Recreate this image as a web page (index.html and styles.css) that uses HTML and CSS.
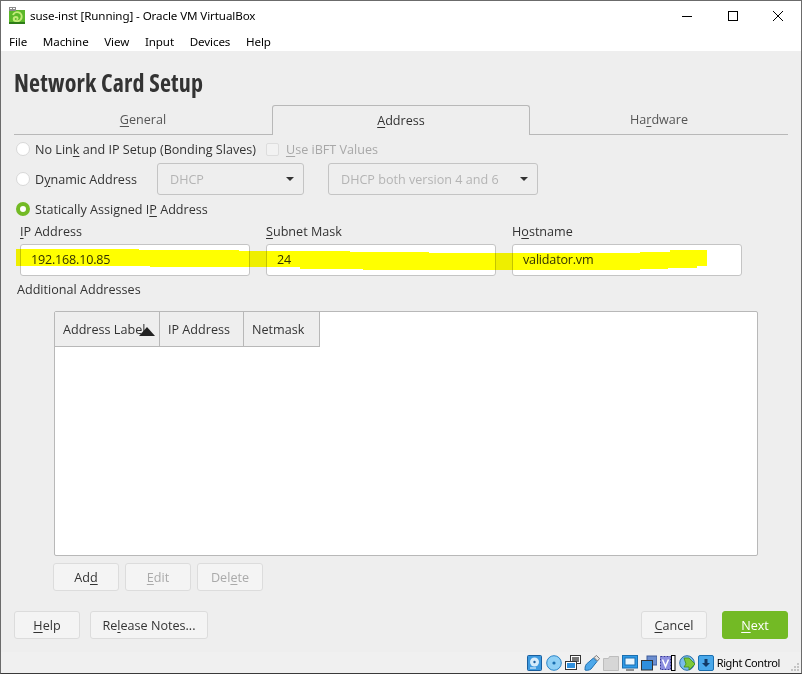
FILE: index.html
```html
<!DOCTYPE html>
<html lang="en">
<head>
  <meta charset="UTF-8">
  <meta name="viewport" content="width=device-width, initial-scale=1.0">
  <title>suse-inst [Running] - Oracle VM VirtualBox</title>
  <link rel="stylesheet" href="styles.css">
</head>
<body>
  <div class="window">
    <div class="titlebar">
      <svg class="app-icon" width="16" height="17" viewBox="0 0 16 17">
        <rect x="0" y="3" width="16" height="14" fill="#5cb82a"/>
        <rect x="0" y="0" width="7" height="4" fill="#8a8a8a"/>
        <rect x="1" y="1" width="2" height="1" fill="#fff"/>
        <rect x="4" y="1" width="2" height="1" fill="#fff"/>
        <path d="M4 8a4.5 4.5 0 1 1 3 6c-3 0-3-4 0-4 2 0 2 2 .5 2" fill="none" stroke="#c4ec7a" stroke-width="2"/>
        <rect x="0" y="15" width="16" height="2" fill="#2e7d18"/>
      </svg>
      <span class="window-title">suse-inst [Running] - Oracle VM VirtualBox</span>
      <div class="window-controls">
        <svg width="10" height="10" viewBox="0 0 10 10"><path d="M0 5.500h10" stroke="#000"/></svg>
        <svg width="10" height="10" viewBox="0 0 10 10"><rect x=".5" y=".5" width="9" height="9" fill="none" stroke="#000"/></svg>
        <svg width="10" height="10" viewBox="0 0 10 10"><path d="M0 0l10 10M10 0L0 10" stroke="#000"/></svg>
      </div>
    </div>
    <div class="menubar">
      <span>File</span>
      <span>Machine</span>
      <span>View</span>
      <span>Input</span>
      <span>Devices</span>
      <span>Help</span>
    </div>

    <div class="dialog">
      <h1>Network Card Setup</h1>

      <div class="tabs">
        <div class="tab"><u>G</u>eneral</div>
        <div class="tab active"><u>A</u>ddress</div>
        <div class="tab">Ha<u>r</u>dware</div>
      </div>

      <div class="option-row first">
        <span class="radio"></span>
        <span class="option-label">No Lin<u>k</u> and IP Setup (Bonding Slaves)</span>
        <span class="checkbox"></span>
        <span class="disabled-text"><u>U</u>se iBFT Values</span>
      </div>
      <div class="option-row">
        <span class="radio"></span>
        <span class="option-label dyn-label">D<u>y</u>namic Address</span>
        <div class="combo combo-small"><span>DHCP</span><i class="caret"></i></div>
        <div class="combo combo-large"><span>DHCP both version 4 and 6</span><i class="caret"></i></div>
      </div>
      <div class="option-row">
        <span class="radio checked"></span>
        <span class="option-label">Statically Assigned I<u>P</u> Address</span>
      </div>

      <div class="fields">
        <div class="field">
          <label><u>I</u>P Address</label>
          <div class="input">192.168.10.85</div>
        </div>
        <div class="field">
          <label><u>S</u>ubnet Mask</label>
          <div class="input">24</div>
        </div>
        <div class="field">
          <label>H<u>o</u>stname</label>
          <div class="input">validator.vm</div>
        </div>
      </div>

      <div class="additional">Additional Addresses</div>

      <div class="table-box">
        <div class="table-head">
          <div class="col col-label">Address Label<i class="sort"></i></div>
          <div class="col col-ip">IP Address</div>
          <div class="col col-mask">Netmask</div>
        </div>
      </div>

      <div class="table-buttons">
        <div class="btn">Ad<u>d</u></div>
        <div class="btn off"><u>E</u>dit</div>
        <div class="btn off">Del<u>e</u>te</div>
      </div>

      <div class="footer">
        <div class="btn btn-help"><u>H</u>elp</div>
        <div class="btn btn-notes">Re<u>l</u>ease Notes...</div>
        <div class="btn btn-cancel"><u>C</u>ancel</div>
        <div class="btn btn-next"><u>N</u>ext</div>
      </div>
    </div>

    <div class="statusbar">
      <svg width="16" height="16" viewBox="0 0 16 16"><rect x=".5" y=".5" width="14" height="15" rx="1" fill="#3d9ae0" stroke="#1a5f9e"/><circle cx="7.500" cy="7" r="4.500" fill="#d8ecfa"/><circle cx="7.500" cy="7" r="1.200" fill="#1a5f9e"/><path d="M3 13h6" stroke="#fff"/></svg>
      <svg width="16" height="16" viewBox="0 0 16 16"><circle cx="8" cy="8" r="7.300" fill="#8fd0f5" stroke="#2a84c8"/><circle cx="8" cy="8" r="1.600" fill="#1a6fb0"/></svg>
      <svg width="16" height="16" viewBox="0 0 16 16"><rect x="5.500" y=".5" width="10" height="8" fill="#fff" stroke="#333"/><rect x="7" y="2" width="7" height="5" fill="#777"/><rect x=".5" y="6.500" width="11" height="8" fill="#fff" stroke="#333"/><rect x="2" y="8" width="8" height="5" fill="#2f8fdc"/></svg>
      <svg width="16" height="16" viewBox="0 0 16 16"><path d="M9.500 3l3.500 3.500-6 7.500c-2 1.500-5 1.500-6 1 0-2 0-4 1.500-6z" fill="#4da8ea" stroke="#1f6fb0"/><path d="M10 2.500l3.500 3.500 2-2.500L12.500.5z" fill="#e4e4e4" stroke="#555" stroke-width=".7"/></svg>
      <svg width="16" height="16" viewBox="0 0 16 16"><path d="M.5 3.500h5l1-2h9v14H.5z" fill="#d6d6d6" stroke="#bdbdbd"/></svg>
      <svg width="16" height="16" viewBox="0 0 16 16"><rect x=".5" y=".5" width="15" height="12.500" fill="#2f9be8" stroke="#1a6fb0"/><rect x="3" y="3" width="10" height="7" fill="#e8f5fd" stroke="#1a6fb0"/><path d="M4 15h8" stroke="#333"/></svg>
      <svg width="16" height="16" viewBox="0 0 16 16"><rect x="6" y="1" width="10" height="9" fill="#6c8ed0" stroke="#3c5a98"/><rect x=".5" y="5.500" width="11" height="9.500" fill="#2f8fdc" stroke="#333"/></svg>
      <svg width="16" height="16" viewBox="0 0 16 16"><rect x=".5" y="1.500" width="10" height="13" fill="#8c8ee0" stroke="#38389c" stroke-dasharray="2 1"/><path d="M2.500 4.500l3 7 3-7" fill="none" stroke="#fff" stroke-width="1.500"/><rect x="11.500" y=".5" width="3.500" height="15" fill="#fff" stroke="#000"/></svg>
      <svg width="16" height="16" viewBox="0 0 16 16"><circle cx="8" cy="8" r="7.300" fill="#79bdea" stroke="#2a6ea8"/><path d="M5 3h5l6 6-6 6v-3H5l2-3z" fill="#7ec83a" stroke="#3f8a18" stroke-width=".8"/></svg>
      <svg width="16" height="16" viewBox="0 0 16 16"><rect x=".5" y=".5" width="15" height="15" rx="1.500" fill="#49a8ea" stroke="#1a6fb0"/><path d="M8 12L4 8h2.500V4h3v4H12z" fill="#123a66"/></svg>
      <span class="host-key">Right Control</span>
      <svg class="grip" width="9" height="9" viewBox="0 0 9 9"><path d="M6 0h2v2H6zM3 3h2v2H3zM6 3h2v2H6zM0 6h2v2H0zM3 6h2v2H3zM6 6h2v2H6z" fill="#c4c4c4"/></svg>
    </div>

    <!-- marker scribble drawn over the form in the screenshot -->
    <svg class="marker" width="802" height="674" viewBox="0 0 802 674">
      <path d="M16 250V249H139V250H239V251H350V252H429V253H640V252H670V250H707V266H697V268H668V269H640V270H435V270H363V269H300V267H150V266H16Z" fill="#ffff00"/>
    </svg>
  </div>
</body>
</html>
```

FILE: styles.css
```css
* {
  box-sizing: border-box;
}
body {
  margin: 0;
  background: #fff;
  font-family: "Open Sans", sans-serif;
  font-size: 12.6px;
  color: #333;
}
u {
  text-underline-offset: 2px;
}
.window {
  position: relative;
  width: 802px;
  height: 674px;
  border: 1px solid #6b6b6b;
  border-bottom-color: #3a3a3a;
  overflow: hidden;
  background: #fff;
}
.titlebar {
  display: flex;
  align-items: center;
  height: 29px;
  padding-left: 8px;
  font-family: "Noto Sans", sans-serif;
  font-size: 11.6px;
  letter-spacing: -.1px;
  color: #000;
}
.app-icon {
  margin-right: 5px;
}
.window-controls {
  display: flex;
  gap: 35.5px;
  margin-left: auto;
  padding-right: 18px;
}
.menubar {
  display: flex;
  align-items: center;
  height: 21px;
  padding: 2px 0 0 8px;
  font-family: "Noto Sans", sans-serif;
  font-size: 11.6px;
  letter-spacing: -.1px;
  color: #000;
}
.menubar span {
  margin-right: 15.7px;
}
.dialog {
  height: 601px;
  padding: 0 13px;
  background: #eee;
}
h1 {
  margin: 0;
  padding-top: 16px;
  height: 54px;
  font-size: 24px;
  line-height: 32px;
  font-weight: 700;
  font-stretch: 75%;
  letter-spacing: .17px;
  color: #333;
}
.tabs {
  display: grid;
  grid-template-columns: 258px 258px 258px;
  height: 30px;
}
.tab {
  display: flex;
  align-items: center;
  justify-content: center;
  padding-bottom: 1px;
  border-bottom: 1px solid #b8b8b8;
  color: #555;
}
.tab.active {
  border: 1px solid #b8b8b8;
  border-bottom: none;
  border-radius: 3px 3px 0 0;
  color: #333;
}
.option-row {
  display: flex;
  align-items: center;
  height: 30px;
  padding-left: 2px;
}
.option-row.first {
  height: 28px;
  margin-bottom: 1px;
}
.radio {
  width: 14px;
  height: 14px;
  border-radius: 50%;
  background: #fff;
  border: 1px solid #d8d8d8;
  margin-right: 5px;
}
.radio.checked {
  background: #fff;
  border: 4px solid #73ba25;
}
.option-label {
  margin-right: 10px;
}
.dyn-label {
  width: 122px;
  margin-right: 0;
}
.checkbox {
  width: 13px;
  height: 13px;
  margin-right: 7px;
  border: 1px solid #ddd;
  border-radius: 2px;
  background: #f2f2f2;
}
.disabled-text {
  color: #a8a8a8;
}
.combo {
  display: flex;
  align-items: center;
  justify-content: space-between;
  height: 32px;
  padding: 0 9px 0 12px;
  border: 1px solid #c4c4c4;
  border-radius: 3px;
  color: #b4b4b4;
}
.combo-small {
  width: 147px;
  margin-right: 24px;
}
.combo-large {
  width: 210px;
}
.caret {
  width: 0;
  height: 0;
  border-left: 4px solid transparent;
  border-right: 4px solid transparent;
  border-top: 4px solid #333;
}
.fields {
  display: flex;
  gap: 16px;
  padding-left: 6px;
}
.field {
  width: 230px;
}
.field label {
  display: block;
  height: 20px;
  line-height: 16px;
}
.input {
  height: 32px;
  line-height: 29px;
  padding-left: 10px;
  border: 1px solid #c4c4c4;
  border-radius: 3px;
  background: #fff;
  color: #333;
  letter-spacing: -.2px;
}
.additional {
  height: 35px;
  padding: 5px 0 0 3px;
}
.table-box {
  width: 704px;
  height: 245px;
  margin-left: 40px;
  border: 1px solid #b8b8b8;
  border-radius: 2px;
  background: #fff;
}
.table-head {
  display: flex;
  height: 35px;
}
.col {
  position: relative;
  display: flex;
  align-items: center;
  padding-left: 8px;
  background: #eee;
  border-right: 1px solid #b8b8b8;
  border-bottom: 1px solid #b8b8b8;
}
.col-label {
  width: 105px;
}
.col-ip {
  width: 84px;
}
.col-mask {
  width: 76px;
}
.sort {
  position: absolute;
  left: 84px;
  top: 15px;
  width: 0;
  height: 0;
  border-left: 8.5px solid transparent;
  border-right: 8.5px solid transparent;
  border-bottom: 9px solid #222;
}
.table-buttons {
  display: flex;
  gap: 6px;
  margin: 7px 0 0 39px;
}
.btn {
  display: flex;
  align-items: center;
  justify-content: center;
  width: 66px;
  height: 28px;
  border: 1px solid #dcdcdc;
  border-radius: 3px;
  background: #f4f4f4;
}
.btn.off {
  color: #aaa;
}
.footer {
  display: flex;
  margin-top: 20px;
}
.btn-help {
  margin-right: 10px;
}
.btn-notes {
  width: 118px;
  margin-right: auto;
}
.btn-cancel {
  margin-right: 15px;
}
.btn-next {
  border-color: #73ba25;
  background: #73ba25;
  color: #fff;
}
.statusbar {
  display: flex;
  align-items: center;
  justify-content: flex-end;
  gap: 3px;
  height: 21px;
  padding-right: 1px;
  background: #f0f0f0;
  font-family: "Noto Sans", sans-serif;
  font-size: 11px;
  letter-spacing: -.38px;
  color: #000;
}
.host-key {
  margin: 0 8px 0 0;
}
.grip {
  align-self: flex-end;
  margin-bottom: 1px;
}
.marker {
  position: absolute;
  left: -1px;
  top: -1px;
  mix-blend-mode: multiply;
  pointer-events: none;
}
```
